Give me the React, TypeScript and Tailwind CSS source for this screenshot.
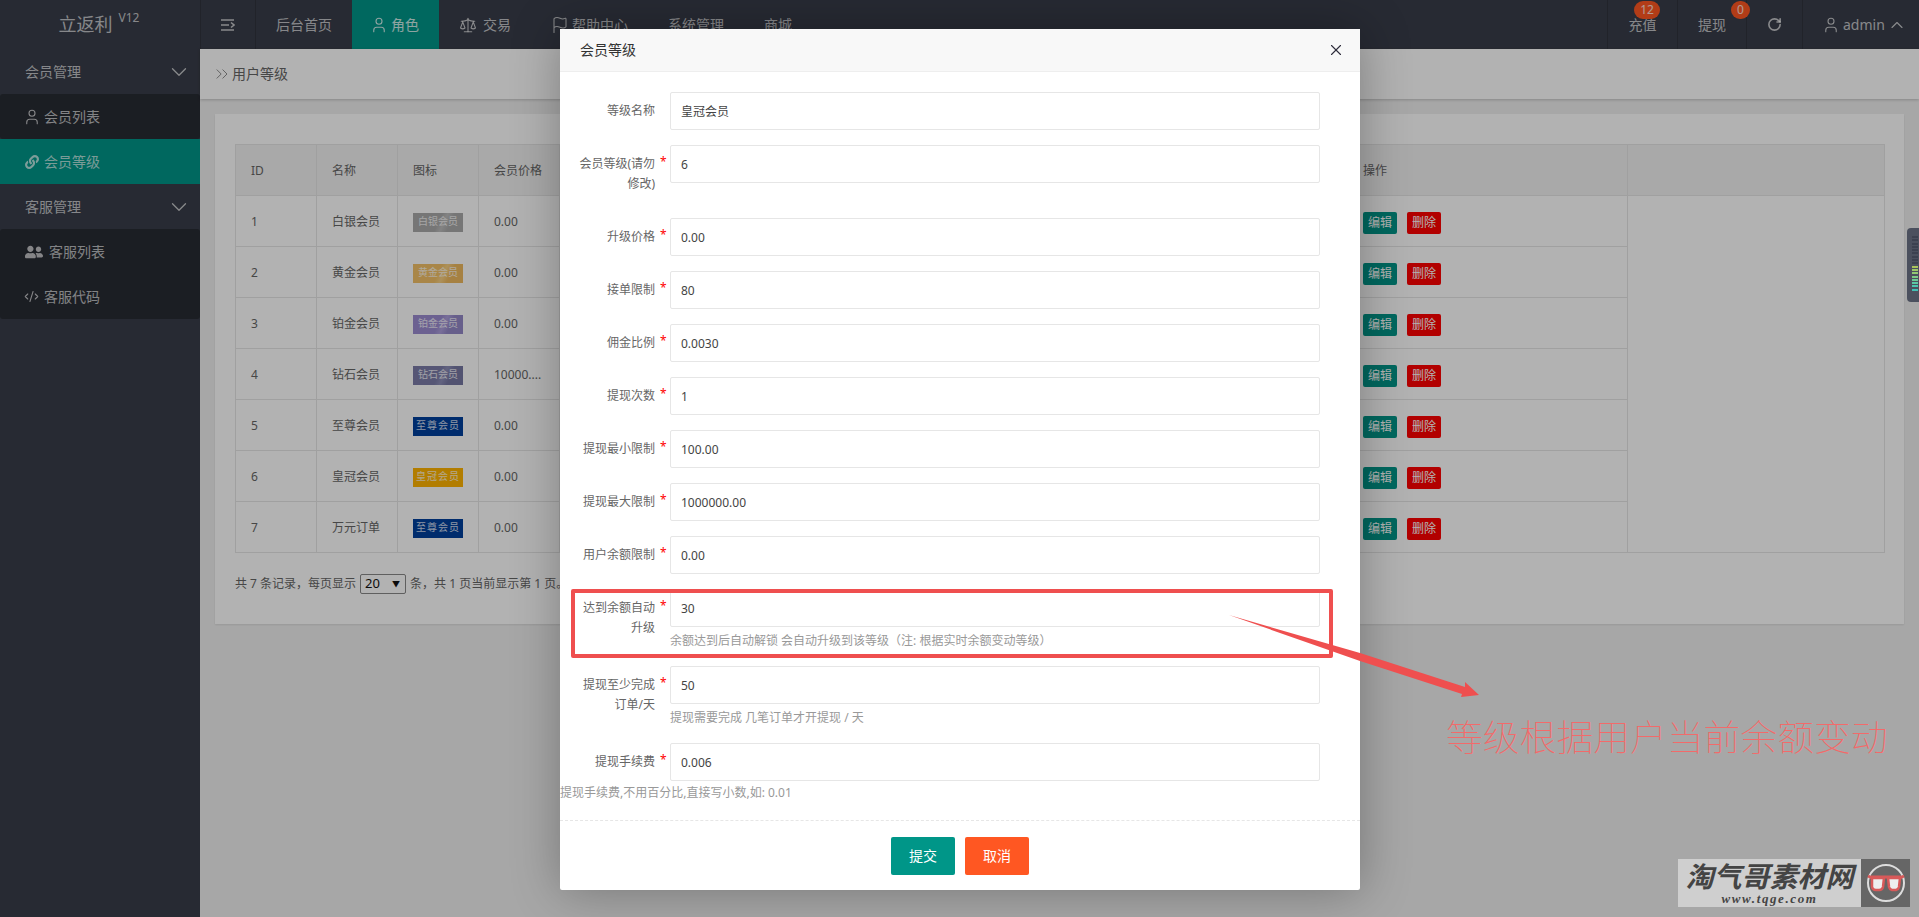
import type { ReactNode } from 'react';
import { ChevronDown, ChevronUp, ChevronsRight, CodeXml, Flag, RotateCw, Scale, User, X } from 'lucide-react';
import { FaLink, FaUserFriends } from 'react-icons/fa';

const levels = [
  { id: 1, name: '白银会员', price: '0.00', badge: '白银会员', badgeClass: 'bg-[linear-gradient(115deg,#a9a9a9_50%,#bcbcbc_60%,#a9a9a9_72%)] text-[10px]' },
  { id: 2, name: '黄金会员', price: '0.00', badge: '黄金会员', badgeClass: 'bg-[linear-gradient(115deg,#f2c167_50%,#f8d083_60%,#eeb95f_72%)] text-[10px]' },
  { id: 3, name: '铂金会员', price: '0.00', badge: '铂金会员', badgeClass: 'bg-[linear-gradient(115deg,#9b8cd0_50%,#ad9fdc_60%,#9488c8_72%)] text-[10px]' },
  { id: 4, name: '钻石会员', price: '10000....', badge: '钻石会员', badgeClass: 'bg-[linear-gradient(115deg,#7b7ca8_50%,#8d8eb8_60%,#7677a3_72%)] text-[10px]' },
  { id: 5, name: '至尊会员', price: '0.00', badge: '至尊会员', badgeClass: 'bg-[#003f9d] text-[10px] tracking-[1px]' },
  { id: 6, name: '皇冠会员', price: '0.00', badge: '皇冠会员', badgeClass: 'bg-[#ffb400] text-[10px] tracking-[1px]' },
  { id: 7, name: '万元订单', price: '0.00', badge: '至尊会员', badgeClass: 'bg-[#003f9d] text-[10px] tracking-[1px]' },
];

const fields = [
  { label: '等级名称', value: '皇冠会员', required: false },
  { label: '会员等级(请勿修改)', value: '6', required: true },
  { label: '升级价格', value: '0.00', required: true },
  { label: '接单限制', value: '80', required: true },
  { label: '佣金比例', value: '0.0030', required: true },
  { label: '提现次数', value: '1', required: true },
  { label: '提现最小限制', value: '100.00', required: true },
  { label: '提现最大限制', value: '1000000.00', required: true },
  { label: '用户余额限制', value: '0.00', required: true },
  { label: '达到余额自动升级', value: '30', required: true, help: '余额达到后自动解锁 会自动升级到该等级（注: 根据实时余额变动等级）' },
  { label: '提现至少完成订单/天', value: '50', required: true, help: '提现需要完成 几笔订单才开提现 / 天' },
  { label: '提现手续费', value: '0.006', required: true },
];

function NavItem({ children, active, className }: { children: ReactNode; active?: boolean; className?: string }) {
  return (
    <div className={`flex h-full items-center px-5 ${active ? 'bg-[#009688] text-white/80' : ''} ${className ?? ''}`}>
      {children}
    </div>
  );
}

function TopBar() {
  return (
    <header className="flex h-[49px] shrink-0 bg-[#393d49] text-sm text-white/70">
      <div className="flex w-[200px] items-center justify-center pr-[2px]">
        <span className="text-[18px]">立返利</span>
        <sup className="ml-[6px] -mt-[1px] text-xs">V12</sup>
      </div>
      <div className="flex w-[56px] items-center justify-center border-x border-[#30333d]">
        <svg width="14" height="12" viewBox="0 0 14 12" fill="none" stroke="currentColor" strokeWidth="1.6">
          <path d="M0 1h13M0 6h8M0 11h13M10 3.5l3 2.5-3 2.5" />
        </svg>
      </div>
      <NavItem>后台首页</NavItem>
      <NavItem active>
        <User size={18} strokeWidth={1.5} className="-ml-[2px] mr-[3px]" />
        角色
      </NavItem>
      <NavItem>
        <Scale size={18} strokeWidth={1.4} className="mr-[6px]" />
        交易
      </NavItem>
      <NavItem>
        <Flag size={18} strokeWidth={1.4} className="mr-[3px]" />
        帮助中心
      </NavItem>
      <NavItem>系统管理</NavItem>
      <NavItem>商城</NavItem>

      <div className="ml-auto flex h-full">
        <div className="relative flex w-[70px] items-center justify-center border-l border-[#30333d]">
          充值
          <span className="absolute left-[26px] top-[1px] flex h-[18px] w-[26px] items-center justify-center rounded-full bg-[#ff5722] text-xs text-white/80">12</span>
        </div>
        <div className="relative flex w-[69px] items-center justify-center border-l border-[#30333d]">
          提现
          <span className="absolute left-[53px] top-[1px] flex h-[18px] w-[19px] items-center justify-center rounded-full bg-[#ff5722] text-xs text-white/80">0</span>
        </div>
        <div className="flex w-[56px] items-center justify-center border-l border-[#30333d]">
          <RotateCw size={15} strokeWidth={2.6} />
        </div>
        <div className="flex w-[117px] items-center border-l border-[#30333d] pl-[19px]">
          <User size={18} strokeWidth={1.5} className="mr-[3px]" />
          admin
          <ChevronUp size={20} strokeWidth={1.4} className="ml-[2px]" />
        </div>
      </div>
    </header>
  );
}

function SideGroup({ title }: { title: string }) {
  return (
    <div className="flex h-[45px] items-center justify-between pl-[25px] pr-[8px]">
      {title}
      <ChevronDown size={26} strokeWidth={1.2} />
    </div>
  );
}

function SideItem({ children, active }: { children: ReactNode; active?: boolean }) {
  return <div className={`flex h-[45px] items-center pl-[25px] ${active ? 'bg-[#009688]' : ''}`}>{children}</div>;
}

function Sidebar() {
  return (
    <aside className="w-[200px] shrink-0 bg-[#393d49] text-sm text-white/70">
      <SideGroup title="会员管理" />
      <div className="rounded-[3px] bg-[#282b33]">
        <SideItem>
          <User size={18} strokeWidth={1.5} className="-ml-[2px] mr-[3px]" />
          会员列表
        </SideItem>
      </div>
      <SideItem active>
        <FaLink size={14} className="mr-[5px]" />
        会员等级
      </SideItem>
      <SideGroup title="客服管理" />
      <div className="rounded-[3px] bg-[#282b33]">
        <SideItem>
          <FaUserFriends size={18} className="mr-[6px]" />
          客服列表
        </SideItem>
        <SideItem>
          <CodeXml size={15} strokeWidth={1.7} className="-ml-[1px] mr-[5px]" />
          客服代码
        </SideItem>
      </div>
    </aside>
  );
}

function LevelTable() {
  const cell = 'border border-[#e6e6e6] px-[15px] pt-[2px]';
  return (
    <table className="w-[1650px] table-fixed border-collapse text-xs text-[#666]">
      <colgroup>
        <col className="w-[81px]" />
        <col className="w-[81px]" />
        <col className="w-[81px]" />
        <col className="w-[81px]" />
        <col className="w-[788px]" />
        <col className="w-[280px]" />
        <col />
      </colgroup>
      <thead>
        <tr className="h-[51px] bg-[#f2f2f2] text-left">
          {['ID', '名称', '图标', '会员价格', '', '操作', ''].map((head, i) => (
            <th key={i} className={`${cell} font-normal`}>{head}</th>
          ))}
        </tr>
      </thead>
      <tbody>
        {levels.map((level, i) => (
          <tr key={level.id} className="h-[51px]">
            <td className={cell}>{level.id}</td>
            <td className={cell}>{level.name}</td>
            <td className={cell}>
              <span className={`flex h-[19px] w-[50px] items-center justify-center whitespace-nowrap text-white/80 ${level.badgeClass}`}>
                {level.badge}
              </span>
            </td>
            <td className={cell}>{level.price}</td>
            <td className="border border-[#e6e6e6]" />
            <td className={cell}>
              <div className="mt-[2px] flex gap-[10px]">
                <span className="flex h-[22px] w-[34px] items-center justify-center rounded-[2px] bg-[#009688] text-white">编辑</span>
                <span className="flex h-[22px] w-[34px] items-center justify-center rounded-[2px] bg-[#ff0000] text-white">删除</span>
              </div>
            </td>
            {i === 0 && <td rowSpan={7} className="border border-[#e6e6e6]" />}
          </tr>
        ))}
      </tbody>
    </table>
  );
}

function MainContent() {
  return (
    <main className="min-w-0 flex-1 bg-[#f0f0f0]">
      <div className="flex h-[50px] items-center bg-white pl-[12px] text-sm text-[#666] shadow-[0_1px_3px_rgba(0,0,0,0.2)]">
        <ChevronsRight size={20} strokeWidth={1} className="text-[#777]" />
        用户等级
      </div>
      <div className="mx-[15px] mt-[15px] bg-white px-5 pb-[29px] pt-[30px] shadow-[0_1px_2px_rgba(0,0,0,0.1)]">
        <LevelTable />
        <div className="mt-5 flex h-[22px] items-center whitespace-nowrap text-xs text-[#666]">
          共 7 条记录，每页显示
          <span className="mx-[4px] flex h-[20px] w-[46px] items-center justify-between rounded-[2px] border border-[#888] pl-[4px] pr-[5px] text-[13px] text-[#111]">
            20
            <span className="text-[8px]">▼</span>
          </span>
          条，共 1 页当前显示第 1 页。
        </div>
      </div>
    </main>
  );
}

function FormRow({ label, value, required, help }: { label: string; value: string; required: boolean; help?: string }) {
  return (
    <div className="mb-[15px] flex items-start">
      <label className="relative ml-[15px] w-[80px] shrink-0 py-[9px] text-right leading-5 text-[#666]">
        {label}
        {required && <span className="absolute left-[85px] top-[9px] text-xs text-[#ff0000]">*</span>}
      </label>
      <div className="ml-[15px] w-[650px]">
        <input
          readOnly
          value={value}
          className="h-[38px] w-full rounded-[2px] border border-[#e6e6e6] pl-[10px] text-xs text-[#444] outline-none"
        />
        {help && <div className="mt-[4px] leading-5 text-[#999]">{help}</div>}
      </div>
    </div>
  );
}

function LevelModal() {
  return (
    <div className="absolute left-[560px] top-[29px] flex h-[861px] w-[800px] flex-col rounded-[2px] bg-white text-xs shadow-[1px_1px_50px_rgba(0,0,0,0.3)]">
      <div className="flex h-[43px] shrink-0 items-center justify-between border-b border-[#eee] bg-[#f8f8f8] pl-5 pr-[15px] text-sm text-[#333]">
        会员等级
        <X size={18} strokeWidth={1.5} className="text-[#2e2d3c]" />
      </div>
      <form className="pt-5">
        {fields.map((field) => (
          <FormRow key={field.label} {...field} />
        ))}
        <div className="-mt-[13px] mb-[17px] h-5 leading-5 text-[#999]">提现手续费,不用百分比,直接写小数,如: 0.01</div>
        <div className="flex justify-center gap-[10px] border-t border-dashed border-[#e6e6e6] pt-4">
          <button type="button" className="h-[38px] w-[64px] rounded-[2px] bg-[#009688] text-sm text-white">提交</button>
          <button type="button" className="h-[38px] w-[64px] rounded-[2px] bg-[#ff5722] text-sm text-white">取消</button>
        </div>
      </form>
    </div>
  );
}

function Annotation() {
  return (
    <>
      <div className="absolute left-[571px] top-[589px] h-[69px] w-[762px] rounded-[2px] border-4 border-[#ef4f4f]" />
      <svg className="absolute left-[1229px] top-[615px]" width="252" height="84" viewBox="0 0 252 84">
        <polygon points="0,0 131,38 236,72 236,67 250,80 232,82 233,79 131,46" fill="#ef4f4f" />
      </svg>
      <div className="absolute left-[1446px] top-[712px] whitespace-nowrap text-[36.8px] font-thin leading-[50px] text-[#f36a6a]">
        等级根据用户当前余额变动
      </div>
    </>
  );
}

function Watermark() {
  return (
    <div className="absolute left-[1678px] top-[859px] flex h-[48px] w-[232px]">
      <div className="flex w-[183px] flex-col items-center justify-center bg-[#cfcfcf] text-[#444]">
        <span className="text-[28px] font-bold italic leading-[30px]">淘气哥素材网</span>
        <span className="font-['Liberation_Serif',serif] text-[13px] font-bold italic leading-[15px] tracking-[1.6px]">www.tqge.com</span>
      </div>
      <div className="flex w-[49px] items-center justify-center bg-[#666]">
        <svg width="42" height="40" viewBox="0 0 42 40" fill="none">
          <circle cx="21" cy="20" r="18" stroke="#ddd" strokeWidth="2" />
          <path d="M6 14h30M3 13l4 2M39 13l-4 2" stroke="#d85a5a" strokeWidth="3" />
          <path d="M7 15h12l-1 9a4 4 0 0 1-4 3h-3a4 4 0 0 1-4-3zM23 15h12l-1 9a4 4 0 0 1-3 3h-4a4 4 0 0 1-3-3z" fill="#eee" stroke="#d85a5a" strokeWidth="2.5" />
        </svg>
      </div>
    </div>
  );
}

function SideWidget() {
  const bars = ['#3c4150', '#3c4150', '#3c4150', '#3c4150', '#3c4150', '#3c4150', '#3c4150', '#3c4150', '#3c4150', '#a8c45c', '#9cc768', '#8fca74', '#7dcb86', '#6cca96', '#5bc8a4', '#4cc4ae', '#42bfb4'];
  return (
    <div className="absolute right-0 top-[228px] flex h-[74px] w-[12px] flex-col gap-[1.3px] rounded-l-[4px] bg-[#4b505e] py-[8px] pl-[5px]">
      {bars.map((color, i) => (
        <span key={i} className="h-[2px] w-[6px]" style={{ backgroundColor: color }} />
      ))}
    </div>
  );
}

export default function App() {
  return (
    <div className="relative flex h-screen w-full flex-col overflow-hidden font-['Noto_Sans','Noto_Sans_CJK_SC',sans-serif]">
      <TopBar />
      <div className="flex min-h-0 flex-1">
        <Sidebar />
        <MainContent />
      </div>
      <div className="absolute inset-0 bg-black/30" />
      <SideWidget />
      <LevelModal />
      <Annotation />
      <Watermark />
    </div>
  );
}
